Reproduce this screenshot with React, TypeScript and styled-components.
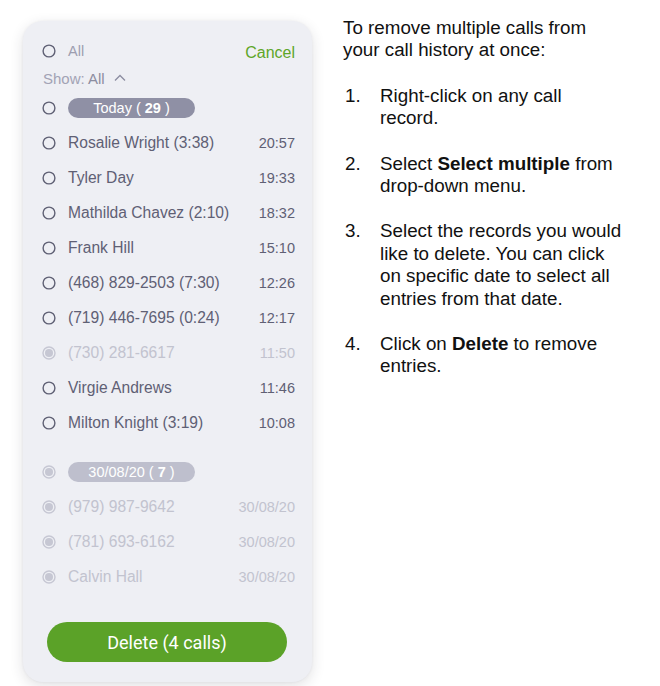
import React from 'react';
import styled, { createGlobalStyle } from 'styled-components';

const GlobalStyle = createGlobalStyle`
  html, body {
    margin: 0;
    padding: 0;
    background: #ffffff;
  }
  body {
    font-family: 'Liberation Sans', Arial, sans-serif;
  }
`;

const Wrapper = styled.div`
  display: flex;
  align-items: flex-start;
  gap: 31px;
  padding: 17px 0 0 23px;
  width: 660px;
  height: 686px;
  box-sizing: border-box;
`;

const Card = styled.div`
  margin-top: 4px;
  width: 289px;
  height: 661px;
  box-sizing: border-box;
  background: #eeeff4;
  border-radius: 20px;
  box-shadow: 0 4px 14px rgba(40, 40, 60, 0.14), 0 0 3px rgba(40, 40, 60, 0.06);
  padding: 15px 17px 20px 19px;
  display: flex;
  flex-direction: column;
  font-family: 'Liberation Sans', Arial, sans-serif;
`;

const HeaderRow = styled.div`
  height: 30px;
  display: flex;
  align-items: center;
`;

const AllLabel = styled.span`
  flex: 1;
  font-size: 14.5px;
  color: #9d9eb0;
`;

const Cancel = styled.span`
  color: #5ea629;
  font-size: 16px;
  padding-top: 3px;
`;

const ShowRow = styled.div`
  height: 24px;
  display: flex;
  align-items: center;
  font-size: 15px;
  color: #a2a3b4;
  gap: 9px;
  padding-left: 1px;

  b {
    font-weight: 400;
    color: #8c8da0;
  }
`;

const Row = styled.div`
  height: 35px;
  display: flex;
  align-items: center;
`;

const Spacer = styled.div<{ size: number }>`
  height: ${(p) => p.size}px;
  flex-shrink: 0;
`;

const RadioBox = styled.span`
  width: 14px;
  height: 14px;
  flex-shrink: 0;
  margin-right: 12px;
  display: flex;
`;

const Name = styled.span<{ muted?: boolean }>`
  flex: 1;
  font-size: 15.6px;
  color: ${(p) => (p.muted ? '#c2c3cf' : '#5f6074')};
  white-space: nowrap;
`;

const Time = styled.span<{ muted?: boolean }>`
  font-size: 14.5px;
  color: ${(p) => (p.muted ? '#c2c3cf' : '#5f6074')};
`;

const Pill = styled.span<{ light?: boolean }>`
  width: 127px;
  height: 20px;
  border-radius: 10px;
  background: ${(p) => (p.light ? '#bebfcd' : '#8f90a5')};
  color: #ffffff;
  font-size: 14.5px;
  display: flex;
  align-items: center;
  justify-content: center;
  white-space: pre;
`;

const DeleteButton = styled.button`
  margin: 28px 0 0 5px;
  width: 240px;
  height: 40px;
  border: none;
  border-radius: 20px;
  background: #5ba228;
  color: #ffffff;
  font-family: Roboto, 'Liberation Sans', sans-serif;
  font-size: 18px;
  cursor: pointer;
`;

const Help = styled.div`
  width: 283px;
  font-family: 'Liberation Sans', Arial, sans-serif;
  font-size: 18.8px;
  line-height: 22.4px;
  color: #111111;
`;

const Intro = styled.p`
  margin: 0 0 23px;
  white-space: nowrap;
`;

const Steps = styled.ol`
  list-style: none;
  margin: 0;
  padding: 0;
  display: flex;
  flex-direction: column;
  gap: 23px;
`;

const Step = styled.li`
  display: flex;

  span:first-child {
    width: 35px;
    flex-shrink: 0;
    padding-left: 2px;
  }
`;

const Radio: React.FC<{ checked?: boolean }> = ({ checked }) => (
  <RadioBox>
    <svg width="14" height="14" viewBox="0 0 14 14">
      {checked ? (
        <>
          <circle cx="7" cy="7" r="6" fill="none" stroke="#c6c7d3" strokeWidth="1.4" />
          <circle cx="7" cy="7" r="4" fill="#c6c7d3" />
        </>
      ) : (
        <circle cx="7" cy="7" r="5.9" fill="none" stroke="#5f6074" strokeWidth="1.4" />
      )}
    </svg>
  </RadioBox>
);

interface ICall {
  name: string;
  time: string;
  selected?: boolean;
}

const today: ICall[] = [
  { name: 'Rosalie Wright (3:38)', time: '20:57' },
  { name: 'Tyler Day', time: '19:33' },
  { name: 'Mathilda Chavez (2:10)', time: '18:32' },
  { name: 'Frank Hill', time: '15:10' },
  { name: '(468) 829-2503 (7:30)', time: '12:26' },
  { name: '(719) 446-7695 (0:24)', time: '12:17' },
  { name: '(730) 281-6617', time: '11:50', selected: true },
  { name: 'Virgie Andrews', time: '11:46' },
  { name: 'Milton Knight (3:19)', time: '10:08' },
];

const older: ICall[] = [
  { name: '(979) 987-9642', time: '30/08/20', selected: true },
  { name: '(781) 693-6162', time: '30/08/20', selected: true },
  { name: 'Calvin Hall', time: '30/08/20', selected: true },
];

const CallRow: React.FC<{ call: ICall }> = ({ call }) => (
  <Row>
    <Radio checked={call.selected} />
    <Name muted={call.selected}>{call.name}</Name>
    <Time muted={call.selected}>{call.time}</Time>
  </Row>
);

const Chevron = () => (
  <svg width="12" height="8" viewBox="0 0 12 8">
    <path d="M1 6.5 L6 1.5 L11 6.5" fill="none" stroke="#8c8da0" strokeWidth="1.3" />
  </svg>
);

const App: React.FC = () => {
  return (
    <>
      <GlobalStyle />
      <Wrapper>
        <Card>
          <HeaderRow>
            <Radio />
            <AllLabel>All</AllLabel>
            <Cancel>Cancel</Cancel>
          </HeaderRow>
          <ShowRow>
            <span>
              Show: <b>All</b>
            </span>
            <Chevron />
          </ShowRow>
          <Row>
            <Radio />
            <Pill>
              Today ( <b>29</b> )
            </Pill>
          </Row>
          {today.map((c) => (
            <CallRow key={c.name} call={c} />
          ))}
          <Spacer size={14} />
          <Row>
            <Radio checked />
            <Pill light>
              30/08/20 ( <b>7</b> )
            </Pill>
          </Row>
          {older.map((c) => (
            <CallRow key={c.name} call={c} />
          ))}
          <DeleteButton>Delete (4 calls)</DeleteButton>
        </Card>
        <Help>
          <Intro>
            To remove multiple calls from
            <br />
            your call history at once:
          </Intro>
          <Steps>
            <Step>
              <span>1.</span>
              <span>
                Right-click on any call
                <br />
                record.
              </span>
            </Step>
            <Step>
              <span>2.</span>
              <span>
                Select <b>Select multiple</b> from drop-down menu.
              </span>
            </Step>
            <Step>
              <span>3.</span>
              <span>
                Select the records you would like to delete. You can click
                on specific date to select all entries from that date.
              </span>
            </Step>
            <Step>
              <span>4.</span>
              <span>
                Click on <b>Delete</b> to remove entries.
              </span>
            </Step>
          </Steps>
        </Help>
      </Wrapper>
    </>
  );
};

export default App;
